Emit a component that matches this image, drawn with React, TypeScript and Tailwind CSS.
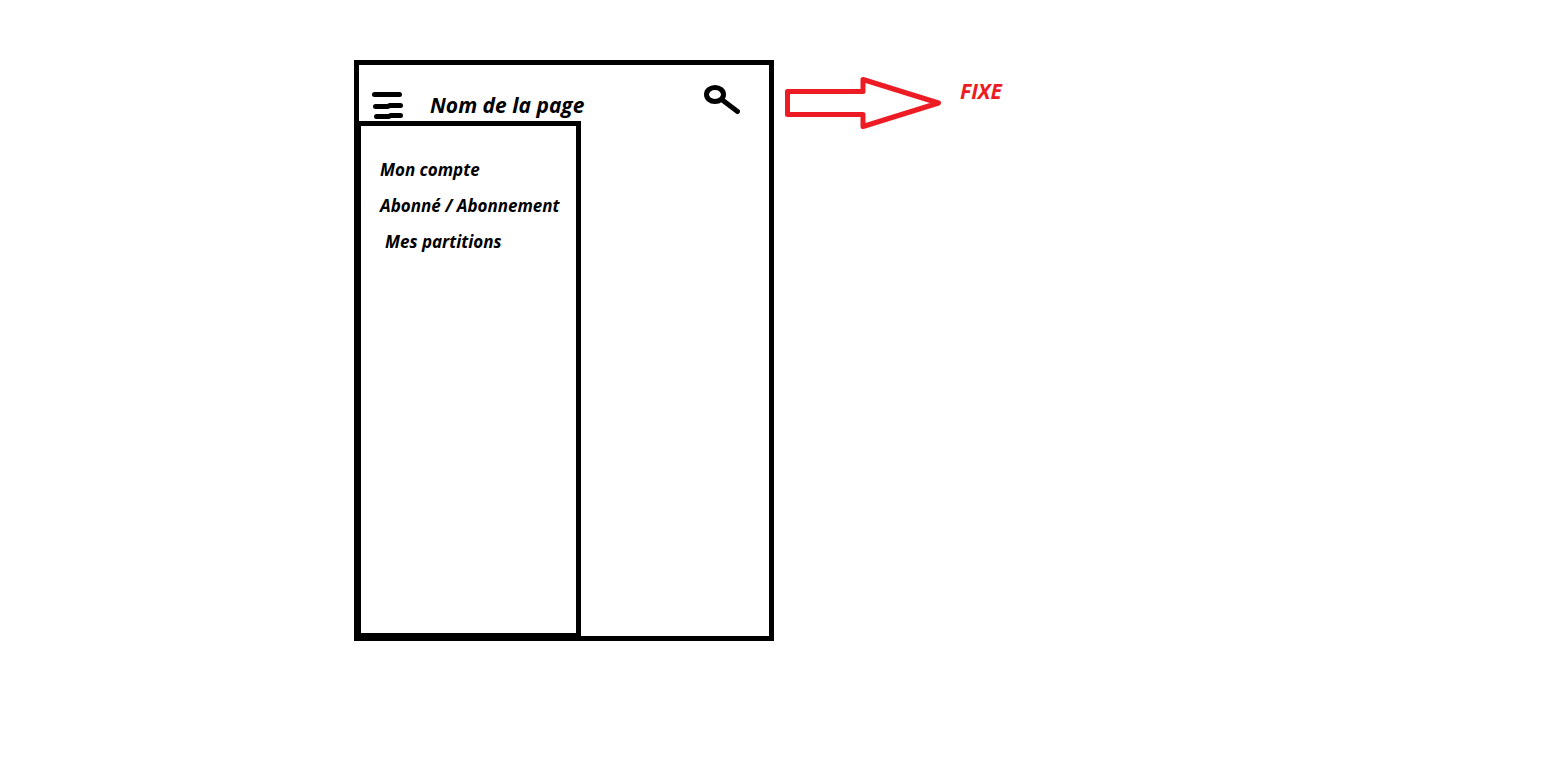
const menuItems = [
  { label: "Mon compte", indent: "pl-0" },
  { label: "Abonné / Abonnement", indent: "pl-0" },
  { label: "Mes partitions", indent: "pl-[5px]" },
];

function MenuIcon() {
  return (
    <svg width="32" height="28" viewBox="0 0 32 28" fill="none" stroke="currentColor" strokeWidth="5" strokeLinecap="round" strokeLinejoin="round" aria-hidden="true">
      <path d="M2.5 2.5H27.5" />
      <path d="M3.5 14.5H16L17.5 13.5H28.5" />
      <path d="M4.5 24.5H17L18.5 23.5H28.5" />
    </svg>
  );
}

function SearchIcon() {
  return (
    <svg width="36" height="30" viewBox="0 0 36 30" fill="none" stroke="currentColor" strokeWidth="5" strokeLinecap="round" aria-hidden="true">
      <ellipse cx="11" cy="9.5" rx="8.5" ry="7" />
      <path d="M19 15.5L33.5 26.5" />
    </svg>
  );
}

function FixedArrow() {
  return (
    <svg width="157" height="52" viewBox="0 0 157 52" fill="none" stroke="currentColor" strokeWidth="5" strokeLinejoin="round" aria-hidden="true">
      <path d="M2.5 14.5H78V2.5L153.5 26L78 49.5V37.5H2.5Z" />
    </svg>
  );
}

export default function App() {
  return (
    <main className="flex min-h-screen items-start bg-white pt-[60px] pb-10 pl-[354px] font-['Open_Sans',sans-serif] font-bold text-black italic">
      <section className="flex min-h-[581px] w-[420px] shrink-0 flex-col border-5 border-black">
        <header className="flex h-14 items-start pr-[29px] pl-[13px]">
          <button type="button" aria-label="Menu" className="mt-[27px]">
            <MenuIcon />
          </button>
          <h1 className="mt-[26px] ml-[26px] text-[21px] leading-7">Nom de la page</h1>
          <button type="button" aria-label="Rechercher" className="mt-5 ml-auto">
            <SearchIcon />
          </button>
        </header>
        <nav aria-label="Menu principal" className="w-[222px] grow border-t-5 border-r-5 border-b-3 border-l-2 border-black pt-[26px] pl-[19px]">
          <ul>
            {menuItems.map((item) => (
              <li key={item.label} className={item.indent}>
                <a href="#" className="block text-[17px] leading-9 whitespace-nowrap">
                  {item.label}
                </a>
              </li>
            ))}
          </ul>
        </nav>
      </section>
      <aside className="mt-[17px] ml-[11px] flex items-start text-[#ed1c24]">
        <FixedArrow />
        <p className="ml-[18px] text-[21px] leading-7">FIXE</p>
      </aside>
    </main>
  );
}
